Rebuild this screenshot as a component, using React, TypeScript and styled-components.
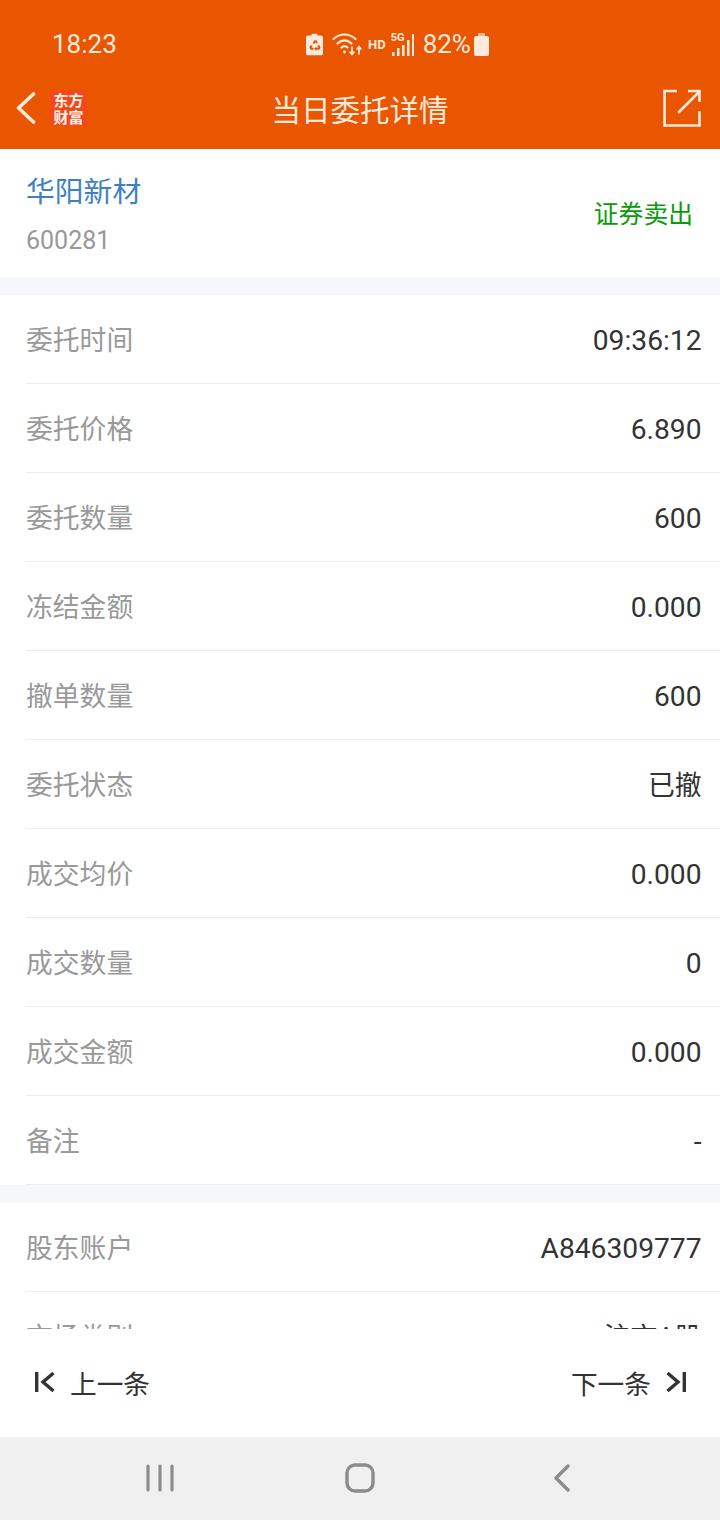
import React from 'react';
import styled, { createGlobalStyle } from 'styled-components';

const GlobalStyle = createGlobalStyle`
  html, body {
    margin: 0;
    padding: 0;
    background: #fff;
  }
  body {
    font-family: Roboto, "Noto Sans CJK SC", sans-serif;
  }
`;

const Page = styled.div`
  width: 720px;
  height: 1520px;
  display: flex;
  flex-direction: column;
  overflow: hidden;
`;
const Header = styled.header`
  height: 149px;
  flex: none;
  background-color: #ea5600;
  color: #fff;
  display: flex;
  flex-direction: column;
`;
const StatusBar = styled.div`
  height: 66px;
  padding: 22px 0 0 52px;
  box-sizing: border-box;
  display: flex;
  align-items: center;
  color: #fdeadd;
`;
const Clock = styled.span`
  font-size: 26px;
  width: 254px;
`;
const StatusIcons = styled.div`
  display: flex;
  align-items: center;
`;
const NetLabel = styled.span<{ $size: number }>`
  font-size: ${(p) => p.$size}px;
  font-weight: 700;
  line-height: 1;
`;
const SignalWrap = styled.div`
  position: relative;
  width: 24px;
  height: 24px;
  margin: 0 8px 0 5px;
`;
const FiveG = styled(NetLabel)`
  position: absolute;
  left: 0;
  top: 0;
`;
const Percent = styled.span`
  font-size: 26px;
  margin-right: 3px;
`;
const NavBar = styled.div`
  flex: 1;
  display: flex;
  align-items: center;
  padding: 0 19px 0 16px;
  position: relative;
`;
const Logo = styled.div`
  width: 37px;
  height: 36px;
  margin-left: 14px;
  border-radius: 5px;
  background-color: #f4471a;
  color: #fff3e8;
  font-family: "Noto Sans CJK SC", sans-serif;
  font-weight: 700;
  font-size: 15px;
  line-height: 17px;
  text-align: center;
  display: flex;
  flex-direction: column;
  justify-content: center;
`;
const Title = styled.div`
  position: absolute;
  left: 160px;
  right: 160px;
  top: 21px;
  text-align: center;
  font-family: "Noto Sans CJK SC", sans-serif;
  font-size: 29.5px;
  line-height: 42px;
  color: #fdeadd;
`;
const ShareButton = styled.div`
  margin-left: auto;
  height: 38px;
`;
const Scroll = styled.main`
  flex: 1;
  overflow: hidden;
  background-color: #fff;
`;
const StockCard = styled.section`
  height: 128px;
  padding: 0 26px;
  display: flex;
  align-items: center;
  justify-content: space-between;
`;
const StockInfo = styled.div`
  display: flex;
  flex-direction: column;
  margin-top: -1px;
`;
const StockName = styled.div`
  font-family: "Noto Sans CJK SC", sans-serif;
  font-size: 28.8px;
  line-height: 42px;
  color: #3f7fc6;
`;
const StockCode = styled.div`
  font-size: 25px;
  line-height: 30px;
  margin-top: 15px;
  color: #999;
`;
const TradeType = styled.div`
  font-family: "Noto Sans CJK SC", sans-serif;
  font-size: 24.8px;
  color: #0a9a0a;
  margin: 0 1px 2px 0;
`;
const Gap = styled.div`
  height: 18px;
  background-color: #f5f7fa;
`;
const Row = styled.div`
  height: 89px;
  box-sizing: border-box;
  margin-left: 26px;
  padding-right: 18.5px;
  border-bottom: 1px solid #eeeeee;
  display: flex;
  align-items: center;
  justify-content: space-between;
`;
const Label = styled.span`
  font-family: "Noto Sans CJK SC", sans-serif;
  font-size: 26.8px;
  color: #999;
  margin-bottom: 2px;
`;
const Value = styled.span<{ $cjk: boolean }>`
  font-size: ${(p) => (p.$cjk ? '26.8px' : '28.2px')};
  color: #333;
  margin-top: ${(p) => (p.$cjk ? '0' : '2px')};
  margin-bottom: ${(p) => (p.$cjk ? '2px' : '0')};
`;
const Footer = styled.footer`
  height: 106px;
  flex: none;
  background-color: #fff;
  display: flex;
  align-items: center;
  justify-content: space-between;
  padding: 0 34px 2px 35px;
`;
const PageButton = styled.div`
  display: flex;
  align-items: center;
  gap: 15px;
  font-family: "Noto Sans CJK SC", sans-serif;
  font-size: 26.7px;
  color: #333;
`;
const SystemNav = styled.nav`
  height: 83px;
  flex: none;
  background-color: #f0f0f0;
  display: grid;
  grid-template-columns: 319px 82px 1fr;
  align-items: center;
  padding-bottom: 2px;
  box-sizing: border-box;
`;
const SystemButton = styled.div<{ $align: string }>`
  display: flex;
  justify-content: ${(p) => p.$align};
`;

const rows: [string, string][] = [
  ['委托时间', '09:36:12'],
  ['委托价格', '6.890'],
  ['委托数量', '600'],
  ['冻结金额', '0.000'],
  ['撤单数量', '600'],
  ['委托状态', '已撤'],
  ['成交均价', '0.000'],
  ['成交数量', '0'],
  ['成交金额', '0.000'],
  ['备注', '-'],
];
const accountRows: [string, string][] = [
  ['股东账户', 'A846309777'],
  ['市场类别', '沪市A股'],
];

const hasCjk = (s: string) => /[\u4e00-\u9fff]/.test(s);

const RecycleBattery = () => (
  <svg width="17" height="23" viewBox="0 0 18 23" style={{ marginRight: 9 }}>
    <path
      fillRule="evenodd"
      fill="#fdeadd"
      d="M6 0h6v2h4a2 2 0 0 1 2 2v17a2 2 0 0 1-2 2H2a2 2 0 0 1-2-2V4a2 2 0 0 1 2-2h4zM9 7l-2 3 1.500 1 1.500-2 1 1.500 1.500-1-1.500-2.500zM5 12l-1.500 3 1.500 2h3v-2H6l1-2zM14 12l-2 1 1 2h-2v-1.500l-2.500 2.500 2.500 2.500V17h3l1.500-2z"
    />
  </svg>
);
const WifiIcon = () => (
  <svg width="30" height="24" viewBox="0 0 30 24" fill="none" stroke="#fdeadd" strokeWidth="2.200" strokeLinecap="round" style={{ marginRight: 6 }}>
    <path d="M1.500 7C8 1 17 1 23.500 7" />
    <path d="M5.500 11.500C10 7.500 15 7.500 19.500 11.500" />
    <path d="M9.500 15.500C11.500 13.800 13.500 13.800 15.500 15.500" />
    <circle cx="12.500" cy="20" r="1.400" fill="#fdeadd" stroke="none" />
    <path d="M20 15v7M18 20l2 2.500 2-2.500M27 22v-7M25 17l2-2.500 2 2.500" strokeWidth="1.600" />
  </svg>
);
const SignalBars = () => (
  <svg width="24" height="24" viewBox="0 0 24 24" fill="#fdeadd" style={{ position: 'absolute', left: 0, top: 0 }}>
    <rect x="1" y="20" width="2.500" height="4" />
    <rect x="6" y="16" width="2.500" height="8" />
    <rect x="11" y="13" width="2.500" height="11" />
    <rect x="16" y="8" width="2.500" height="16" />
    <rect x="21" y="2" width="2" height="22" />
  </svg>
);
const BatteryIcon = () => (
  <svg width="15" height="23" viewBox="0 0 15 23">
    <path d="M4 0h7v3H4z" fill="#f6b58c" />
    <path d="M0 5a2 2 0 0 1 2-2h11a2 2 0 0 1 2 2v16a2 2 0 0 1-2 2H2a2 2 0 0 1-2-2z" fill="#fdeadd" />
  </svg>
);

export default function App() {
  return (
    <Page>
      <GlobalStyle />
      <Header>
        <StatusBar>
          <Clock>18:23</Clock>
          <StatusIcons>
            <RecycleBattery />
            <WifiIcon />
            <NetLabel $size={13}>HD</NetLabel>
            <SignalWrap>
              <SignalBars />
              <FiveG $size={11}>5G</FiveG>
            </SignalWrap>
            <Percent>82%</Percent>
            <BatteryIcon />
          </StatusIcons>
        </StatusBar>
        <NavBar>
          <svg width="20" height="32" viewBox="0 0 20 32" fill="none" stroke="#fdeadd" strokeWidth="3.600" strokeLinecap="round" strokeLinejoin="round">
            <path d="M17.500 2L2.500 16l15 14" />
          </svg>
          <Logo>
            <span>东方</span>
            <span>财富</span>
          </Logo>
          <Title>当日委托详情</Title>
          <ShareButton>
            <svg width="38" height="38" viewBox="0 0 38 38" fill="none" stroke="#fdeadd" strokeWidth="2.600">
              <path d="M14 2H1.500v34.500h35V22" />
              <path d="M16 23L36 3" strokeLinecap="round" />
              <path d="M25 2h11.500v11" />
            </svg>
          </ShareButton>
        </NavBar>
      </Header>
      <Scroll>
        <StockCard>
          <StockInfo>
            <StockName>华阳新材</StockName>
            <StockCode>600281</StockCode>
          </StockInfo>
          <TradeType>证券卖出</TradeType>
        </StockCard>
        <Gap />
        {rows.map(([label, value]) => (
          <Row key={label}>
            <Label>{label}</Label>
            <Value $cjk={hasCjk(value)}>{value}</Value>
          </Row>
        ))}
        <Gap />
        {accountRows.map(([label, value]) => (
          <Row key={label}>
            <Label>{label}</Label>
            <Value $cjk={hasCjk(value)}>{value}</Value>
          </Row>
        ))}
      </Scroll>
      <Footer>
        <PageButton>
          <svg width="20" height="22" viewBox="0 0 20 22" fill="none" stroke="#333" strokeWidth="3.400">
            <path d="M1.700 1v20M18.500 2L8 11l10.500 9" />
          </svg>
          上一条
        </PageButton>
        <PageButton>
          下一条
          <svg width="20" height="22" viewBox="0 0 20 22" fill="none" stroke="#333" strokeWidth="3.400">
            <path d="M18.300 1v20M1.500 2L12 11 1.500 20" />
          </svg>
        </PageButton>
      </Footer>
      <SystemNav>
        <SystemButton $align="center">
          <svg width="28" height="28" viewBox="0 0 28 28" fill="none" stroke="#8c8c8c" strokeWidth="3.200" strokeLinecap="round">
            <path d="M2 2v24M14 2v24M26 2v24" />
          </svg>
        </SystemButton>
        <SystemButton $align="center">
          <svg width="30" height="30" viewBox="0 0 30 30" fill="none" stroke="#8c8c8c" strokeWidth="3.400">
            <rect x="2" y="2" width="26" height="26" rx="8" />
          </svg>
        </SystemButton>
        <SystemButton $align="flex-start">
          <svg width="18" height="28" viewBox="0 0 18 28" fill="none" stroke="#8c8c8c" strokeWidth="3.400" strokeLinecap="round" strokeLinejoin="round" style={{ marginLeft: 152 }}>
            <path d="M15 2L3 14l12 12" />
          </svg>
        </SystemButton>
      </SystemNav>
    </Page>
  );
}
